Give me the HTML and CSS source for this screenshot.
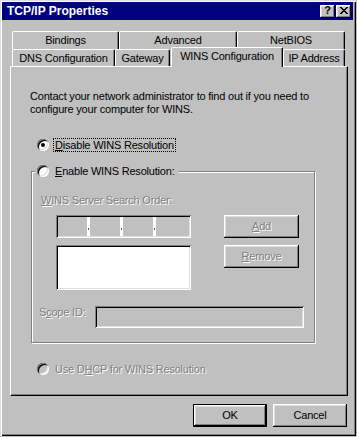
FILE: index.html
```html
<!DOCTYPE html>
<html>
<head>
<meta charset="utf-8">
<link rel="stylesheet" href="styles.css">
</head>
<body>
<div class="window">
  <div class="titlebar">
    <span class="title">TCP/IP Properties</span>
    <div class="tb-buttons">
      <span class="tb-btn help">?</span>
      <span class="tb-btn">
        <svg width="8" height="7" viewBox="0 0 8 7"><path d="M0 0h2v1h-2zM6 0h2v1h-2zM1 1h2v1h-2zM5 1h2v1h-2zM2 2h4v1h-4zM3 3h2v1h-2zM2 4h4v1h-4zM1 5h2v1h-2zM5 5h2v1h-2zM0 6h2v1h-2zM6 6h2v1h-2z" fill="#000"/></svg>
      </span>
    </div>
  </div>
  <div class="body">
    <div class="tabs">
      <div class="tabrow back">
        <div class="tab w-bind">Bindings</div>
        <div class="tab w-adv">Advanced</div>
        <div class="tab w-net">NetBIOS</div>
      </div>
      <div class="tabrow front">
        <div class="tab w-dns">DNS Configuration</div>
        <div class="tab w-gw">Gateway</div>
        <div class="tab sel w-wins">WINS Configuration</div>
        <div class="tab w-ip">IP Address</div>
      </div>
    </div>
    <div class="panel">
      <p class="intro">Contact your network administrator to find out if you need to configure your computer for WINS.</p>
      <div class="radio-row disable-row">
        <span class="radio checked"></span>
        <span class="lbl focus"><u>D</u>isable WINS Resolution</span>
      </div>
      <div class="group">
        <div class="group-head">
          <span class="radio"></span>
          <span class="lbl"><u>E</u>nable WINS Resolution:</span>
        </div>
        <div class="search-label dis"><u>W</u>INS Server Search Order:</div>
        <div class="server-row">
          <div class="leftcol">
            <div class="ipbox">
              <span class="seg s1"></span><span class="sep"><i></i></span>
              <span class="seg s2"></span><span class="sep"><i></i></span>
              <span class="seg s3"></span><span class="sep"><i></i></span>
              <span class="seg s4"></span>
            </div>
            <div class="listbox"></div>
          </div>
          <div class="btncol">
            <div class="btn wide dis"><u>A</u>dd</div>
            <div class="btn wide dis"><u>R</u>emove</div>
          </div>
        </div>
        <div class="scope-row">
          <span class="scope-label dis">S<u>c</u>ope ID:</span>
          <div class="textbox"></div>
        </div>
      </div>
      <div class="radio-row dhcp-row">
        <span class="radio disabled"></span>
        <span class="lbl dis">Use D<u>H</u>CP for WINS Resolution</span>
      </div>
    </div>
    <div class="actions">
      <div class="btn default">OK</div>
      <div class="btn">Cancel</div>
    </div>
  </div>
</div>
</body>
</html>
```
FILE: styles.css
```css
* { box-sizing: border-box; }
html, body { margin: 0; padding: 0; }
body {
  background: #c0c0c0;
  width: 357px;
  height: 437px;
  overflow: hidden;
  font-family: "Liberation Sans", Arial, sans-serif;
  font-size: 11px;
  letter-spacing: -0.2px;
  line-height: 13px;
  color: #000;
}
u { text-decoration: underline; text-underline-offset: 1px; }

.window {
  width: 356px;
  height: 436px;
  padding: 2px 3px 3px 2px;
  background: #c0c0c0;
  box-shadow: inset 1px 1px #dfdfdf, inset 2px 2px #fff, inset -1px -1px #000, inset -2px -2px #808080;
  display: flex;
  flex-direction: column;
}

.titlebar {
  height: 18px;
  flex: none;
  background: #000080;
  display: flex;
  align-items: center;
  justify-content: space-between;
  padding: 0 2px 0 5px;
}
.title {
  color: #fff;
  font-weight: bold;
  font-size: 12px;
  letter-spacing: 0;
}
.tb-buttons { display: flex; gap: 1px; }
.tb-btn {
  width: 15px;
  height: 13px;
  background: #c0c0c0;
  box-shadow: inset -1px -1px #000, inset 1px 1px #fff, inset -2px -2px #808080, inset 2px 2px #dfdfdf;
  display: flex;
  align-items: center;
  justify-content: center;
  padding-bottom: 1px;
}
.tb-btn.help {
  font-weight: bold;
  font-size: 11px;
  letter-spacing: 0;
  line-height: 11px;
}

.body {
  flex: 1;
  padding: 11px 0 0 8px;
  display: flex;
  flex-direction: column;
}

.tabs { margin-left: 2px; width: 333px; }
.tabrow { display: flex; }
.tabrow.back { height: 18px; }
.tabrow.front { height: 17px; }
.tab {
  height: 100%;
  display: flex;
  align-items: center;
  justify-content: center;
  background: #c0c0c0;
  border-top: 1px solid #fff;
  border-left: 1px solid #fff;
  border-right: 1px solid #000;
  box-shadow: inset -1px 0 #808080;
  border-radius: 2px 2px 0 0;
  white-space: nowrap;
}
.w-bind { width: 107px; }
.w-adv { width: 118px; }
.w-net { width: 108px; }
.w-dns { width: 103px; }
.w-gw { width: 55px; }
.w-wins { width: 112px; }
.w-ip { width: 62px; }
.tab.sel {
  height: 20px;
  margin: -2px 0 0 1px;
  padding-bottom: 3px;
  position: relative;
  z-index: 1;
}

.panel {
  width: 338px;
  height: 330px;
  flex: none;
  border-top: 1px solid #fff;
  border-left: 1px solid #fff;
  border-right: 1px solid #000;
  border-bottom: 1px solid #000;
  box-shadow: inset -1px -1px #808080;
  padding: 23px 0 0 19px;
}
.intro { margin: 0; width: 300px; }

.radio-row {
  display: flex;
  align-items: center;
  height: 14px;
}
.disable-row { margin: 22px 0 0 7px; }
.dhcp-row { margin: 19px 0 0 7px; }

.radio {
  width: 12px;
  height: 12px;
  flex: none;
  border-radius: 50%;
  background: #fff;
  box-shadow: inset 1px 1px #808080, inset -1px -1px #fff, inset 2px 2px #000, inset -2px -2px #dfdfdf;
  position: relative;
}
.radio.checked::after {
  content: "";
  position: absolute;
  left: 4px;
  top: 4px;
  width: 4px;
  height: 4px;
  border-radius: 50%;
  background: #000;
}
.radio.disabled { background: #c0c0c0; }

.lbl {
  margin-left: 4px;
  padding: 0 1px;
  border: 1px dotted transparent;
  line-height: 12px;
  white-space: nowrap;
}
.lbl.focus { border-color: #000; }

.dis {
  color: #808080;
  text-shadow: 1px 1px 0 #fff;
}

.group {
  margin: 19px 0 0 1px;
  width: 284px;
  border: 1px solid #808080;
  box-shadow: inset 1px 1px #fff, 1px 1px #fff;
  padding: 0 0 14px 9px;
}
.group-head {
  display: flex;
  align-items: center;
  height: 14px;
  width: max-content;
  margin: -8px 0 0 -6px;
  padding: 0 2px;
  background: #c0c0c0;
}
.search-label { margin-top: 16px; white-space: nowrap; }

.server-row {
  display: flex;
  margin: 8px 0 0 15px;
}
.leftcol {
  width: 135px;
  display: flex;
  flex-direction: column;
  gap: 7px;
}
.ipbox {
  height: 23px;
  padding: 2px;
  display: flex;
  background: #c0c0c0;
  box-shadow: inset 1px 1px #808080, inset -1px -1px #fff, inset 2px 2px #000, inset -2px -2px #dfdfdf;
}
.seg { height: 100%; }
.s1 { width: 29px; }
.s2 { width: 30px; }
.s3 { width: 30px; }
.s4 { flex: 1; }
.sep {
  width: 3px;
  height: 100%;
  background: #fff;
  display: flex;
  justify-content: center;
}
.sep i {
  display: block;
  width: 1px;
  height: 2px;
  margin-top: 11px;
  background: #555;
}
.listbox {
  height: 45px;
  background: #fff;
  box-shadow: inset 1px 1px #808080, inset -1px -1px #fff, inset 2px 2px #000, inset -2px -2px #dfdfdf;
}
.btncol {
  margin-left: 33px;
  display: flex;
  flex-direction: column;
  gap: 7px;
}

.btn {
  width: 74px;
  height: 23px;
  background: #c0c0c0;
  box-shadow: inset -1px -1px #000, inset 1px 1px #fff, inset -2px -2px #808080, inset 2px 2px #dfdfdf;
  display: flex;
  align-items: center;
  justify-content: center;
}
.btn.wide { width: 75px; }
.btn.default {
  border: 1px solid #000;
}

.scope-row {
  display: flex;
  align-items: flex-start;
  margin: 16px 0 0 -2px;
}
.scope-label { width: 56px; padding-top: 0; }
.textbox {
  width: 209px;
  height: 22px;
  background: #c0c0c0;
  box-shadow: inset 1px 1px #808080, inset -1px -1px #fff, inset 2px 2px #000, inset -2px -2px #dfdfdf;
}

.actions {
  width: 338px;
  display: flex;
  justify-content: flex-end;
  gap: 6px;
  margin-top: 8px;
  padding-right: 1px;
}
```
